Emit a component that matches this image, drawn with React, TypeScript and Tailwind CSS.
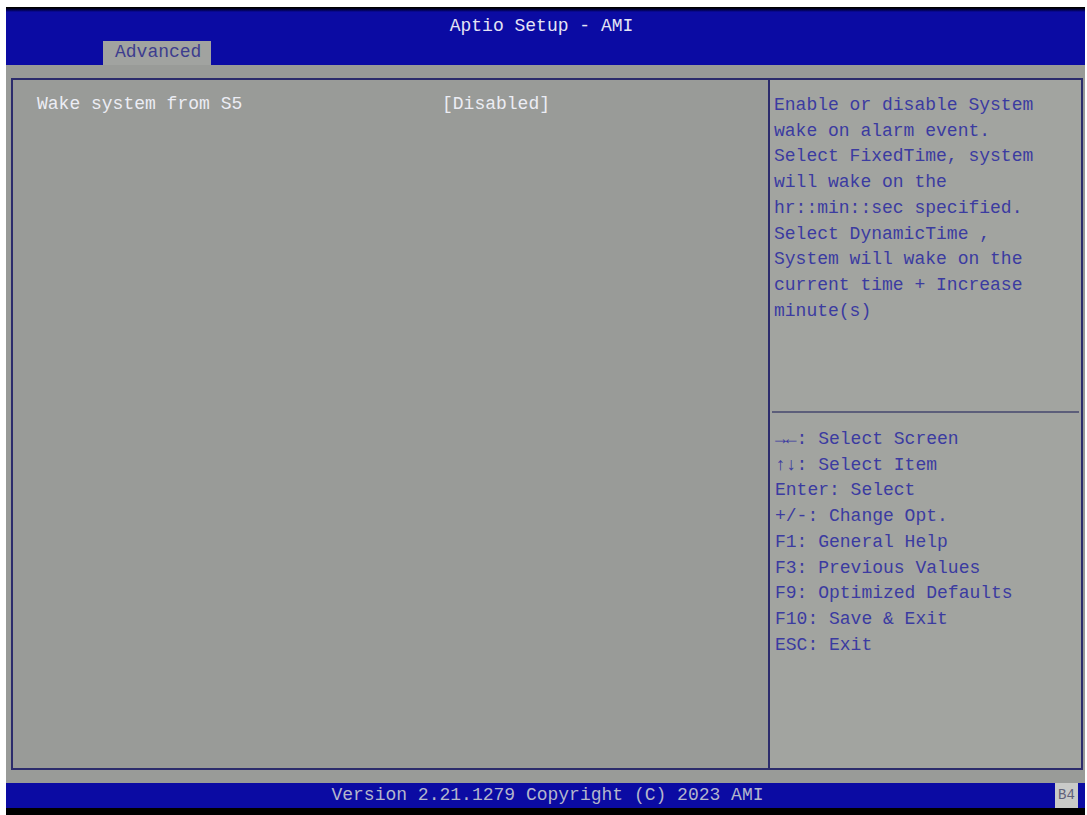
const helpText = [
  'Enable or disable System',
  'wake on alarm event.',
  'Select FixedTime, system',
  'will wake on the',
  'hr::min::sec specified.',
  'Select DynamicTime ,',
  'System will wake on the',
  'current time + Increase',
  'minute(s)',
];

const keys = [
  '→←: Select Screen',
  '↑↓: Select Item',
  'Enter: Select',
  '+/-: Change Opt.',
  'F1: General Help',
  'F3: Previous Values',
  'F9: Optimized Defaults',
  'F10: Save & Exit',
  'ESC: Exit',
];

const mono = "font-['Liberation_Mono','DejaVu_Sans_Mono',monospace]";

export default function App() {
  return (
    <div className={`h-[815px] w-[1087px] bg-white pt-[7px] pl-[6px] ${mono} text-[18px] leading-[25.7px]`}>
      <div className="flex w-[1079px] flex-col">
        {/* header */}
        <div className="flex h-[58px] flex-col bg-[#0b0ba3]">
          <div className="h-[5px] bg-linear-to-b from-black to-[#0b0ba3]" />
          <div className="flex justify-center pt-[2px] pr-[8px] text-[#e4e4f4]">
            <span>Aptio Setup - AMI</span>
          </div>
          <div className="mt-auto flex pl-[97px]">
            <div className="flex h-[24px] w-[108px] items-center bg-[#a1a3a0] pl-[12px] text-[#3d3d8e]">
              Advanced
            </div>
          </div>
        </div>

        {/* body */}
        <div className="bg-[#999b98] pt-[13px] pr-[2px] pb-[13px] pl-[5px]">
          <div className="flex h-[692px] border-2 border-[#2c2c6c]">
            <div className="w-[755px] pt-[12px] pl-[24px] text-[#ecedf4]">
              <div className="flex">
                <span className="w-[405px]">Wake system from S5</span>
                <span>[Disabled]</span>
              </div>
            </div>
            <div className="flex flex-1 flex-col border-l-2 border-[#2c2c6c] bg-[#a2a4a0] text-[#3b3ba0]">
              <div className="h-[331px] pt-[13px] pl-[4px]">
                {helpText.map((line) => (
                  <div key={line}>{line}</div>
                ))}
              </div>
              <div className="mx-[2px] h-[2px] bg-[#5c5e7a]" />
              <div className="pt-[14px] pl-[5px]">
                {keys.map((line) => (
                  <div key={line}>{line}</div>
                ))}
              </div>
            </div>
          </div>
        </div>

        {/* footer */}
        <div className="flex h-[25px] items-center bg-[#0b0ba3] text-[#b4b6cc]">
          <div className="flex flex-1 justify-center pl-[34px]">
            <span>Version 2.21.1279 Copyright (C) 2023 AMI</span>
          </div>
          <div className="mr-[7px] flex h-[25px] w-[23px] items-center justify-center bg-[#c9cac8] text-[14px] text-[#60607a]">
            B4
          </div>
        </div>
        <div className="h-[7px] bg-black" />
      </div>
    </div>
  );
}
